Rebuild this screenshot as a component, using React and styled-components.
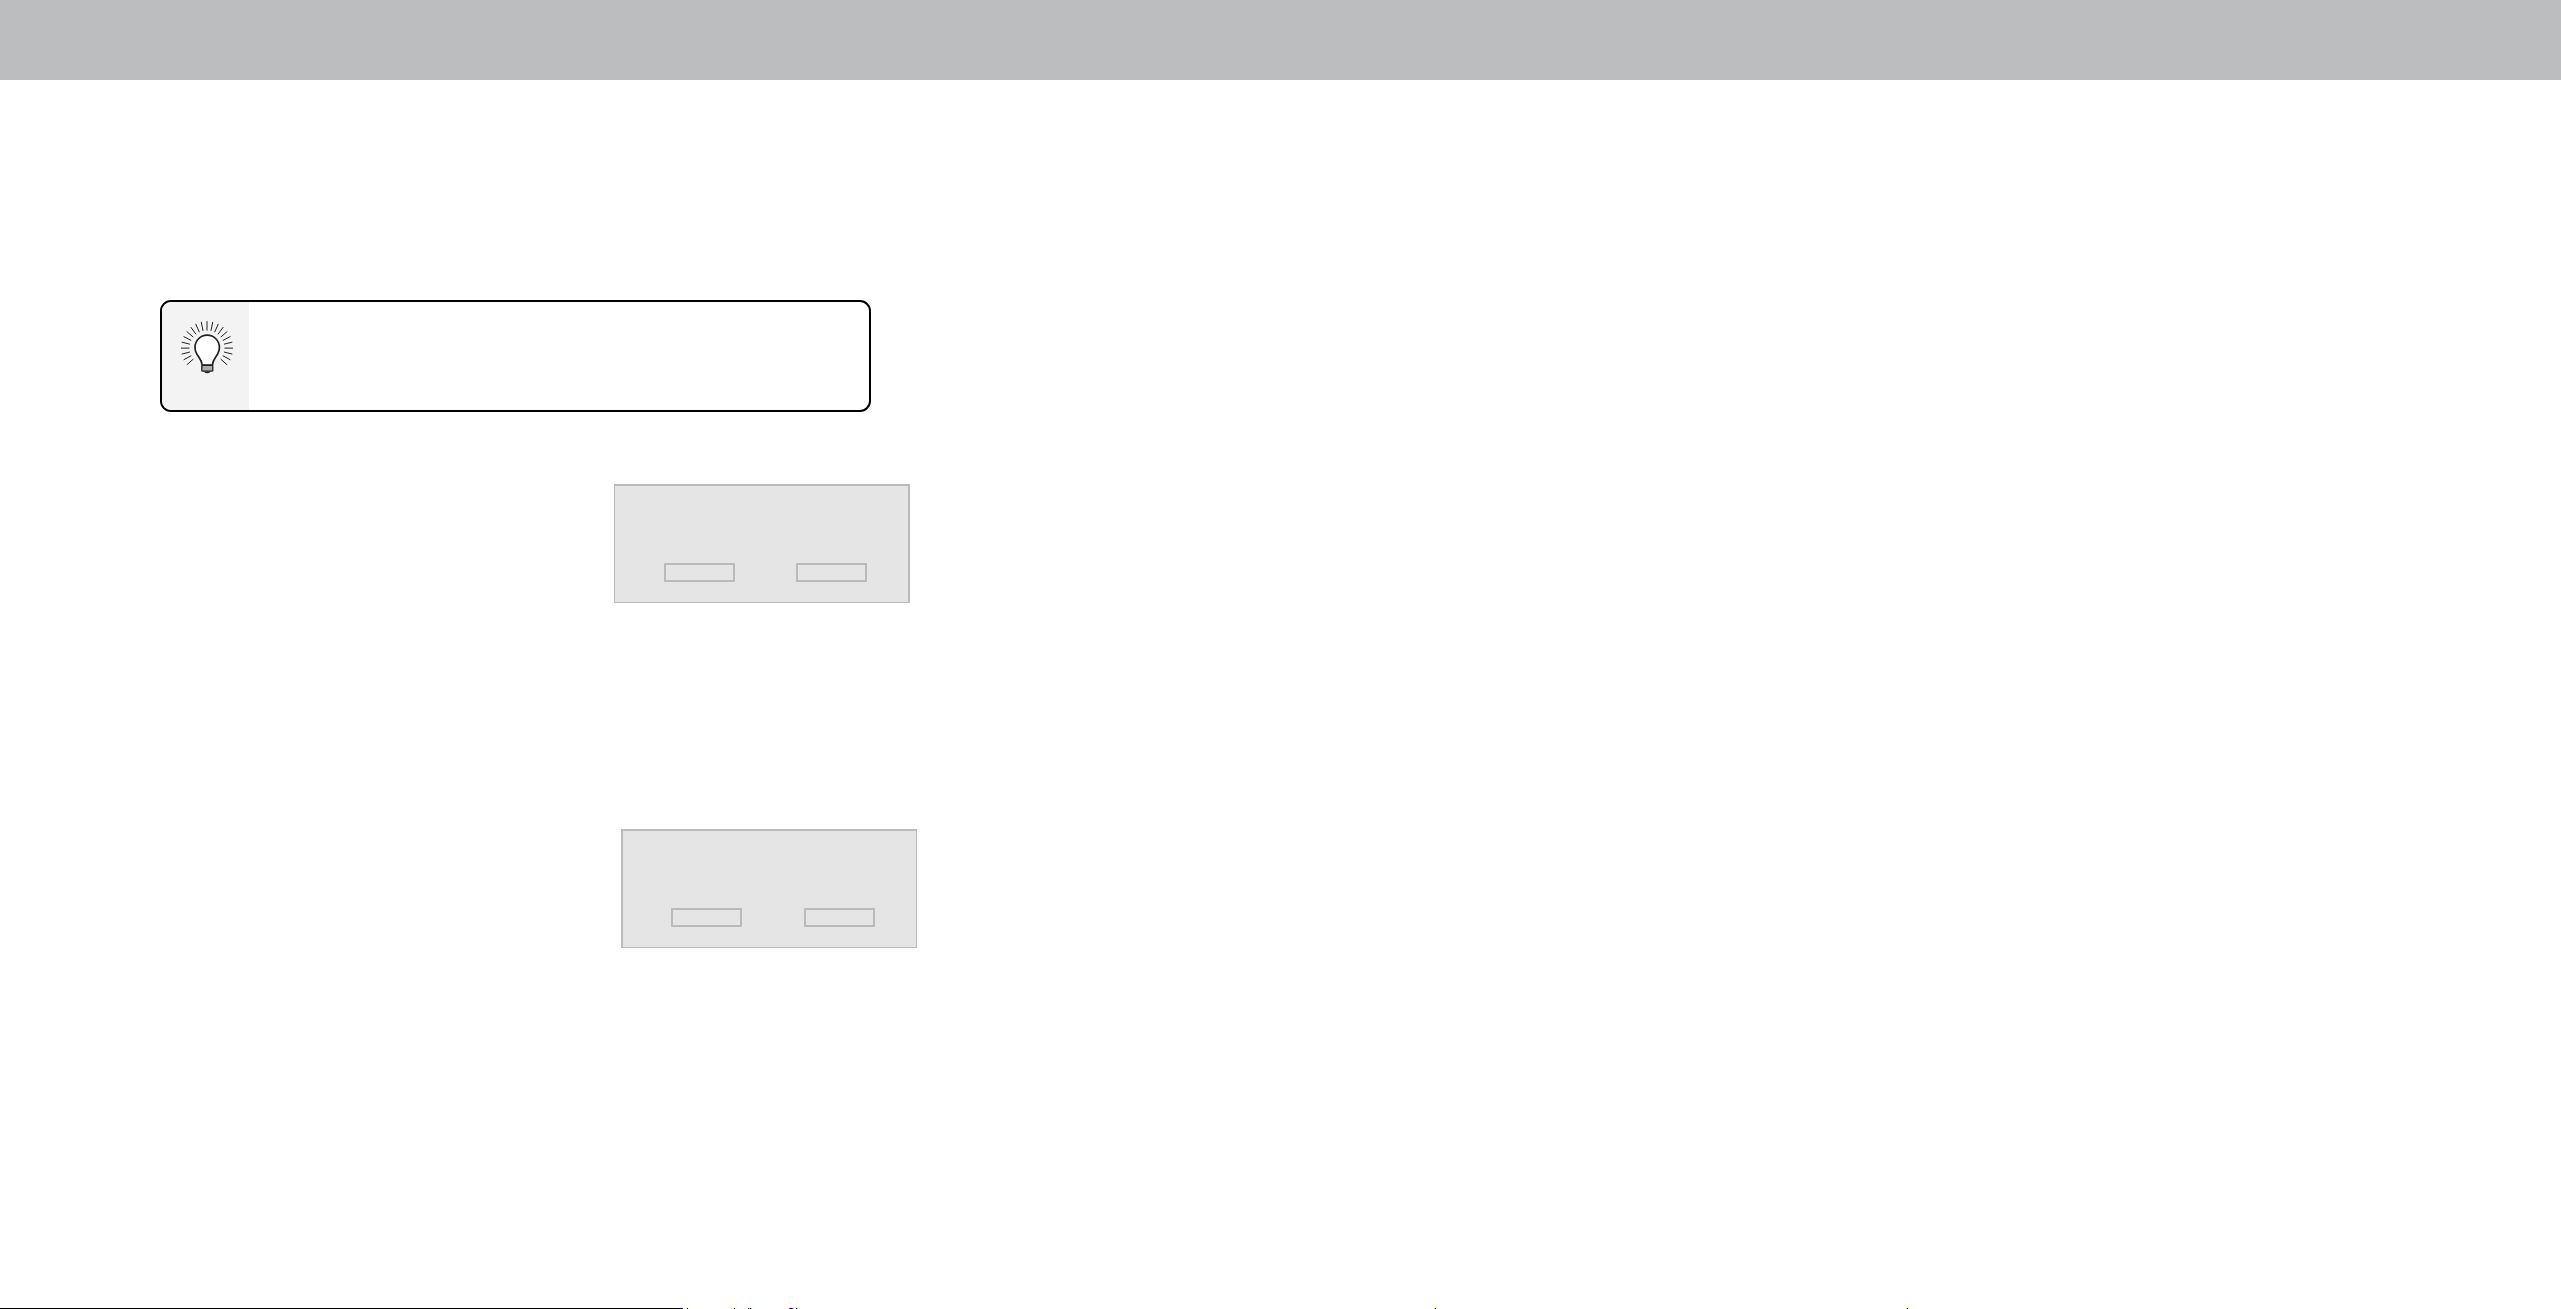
import React from "react";
import styled, { createGlobalStyle } from "styled-components";

const GlobalStyle = createGlobalStyle`
  * {
    box-sizing: border-box;
  }
  body {
    margin: 0;
    background: #fff;
    font-family: "Liberation Sans", Arial, sans-serif;
  }
`;

const Page = styled.div`
  width: 2561px;
  height: 1309px;
  display: flex;
  flex-direction: column;
  overflow: hidden;
`;

const HeaderBar = styled.header`
  flex: none;
  height: 80px;
  background: #bcbdbf;
`;

const Content = styled.main`
  flex: 1;
  display: flex;
  flex-direction: column;
  align-items: flex-start;
  padding: 220px 0 0 160px;
`;

const TipBox = styled.section`
  width: 711px;
  height: 112px;
  display: flex;
  border: 2px solid #000;
  border-radius: 11px;
  overflow: hidden;
`;

const TipIcon = styled.div`
  width: 87px;
  padding: 17px 0 0 17px;
  background: #f3f3f3;
`;

const Dialog = styled.section`
  width: 296px;
  height: 119px;
  display: flex;
  align-items: flex-end;
  gap: ${({ $gap }) => $gap}px;
  margin: ${({ $margin }) => $margin};
  padding: 0 0 20px ${({ $inset }) => $inset}px;
  border: solid #bababa;
  border-width: ${({ $borders }) => $borders};
  background: #e5e5e5;
`;

const DialogButton = styled.div`
  width: 71px;
  height: 19px;
  border: 2px solid #bababa;
`;

const FooterRule = styled.footer`
  flex: none;
  height: 1px;
  display: flex;
`;

const Segment = styled.span`
  width: ${({ $width }) => $width}px;
  height: 1px;
  background: ${({ $color }) => $color || "transparent"};
`;

const segments = [
  [682, "#000"],
  [1, "#00f"],
  [3],
  [1, "#ff0"],
  [1, "#000"],
  [45],
  [1, "#ff0"],
  [1, "#00f"],
  [13],
  [1, "#f00"],
  [1, "#0ff"],
  [1, "#000"],
  [1, "#0ff"],
  [37],
  [1, "#f00"],
  [1, "#00f"],
  [1, "#000"],
  [1, "#f00"],
  [1, "#0ff"],
  [2],
  [1, "#000"],
  [1, "#0ff"],
  [636],
  [1, "#ff0"],
  [1, "#000"],
  [470],
  [1, "#ff0"],
  [1, "#000"],
];

const BULB = { x: 28, y: 29 };
const RAY_STEP = 12.9;
const rays = [...Array(21)].map((_, i) => {
  const angle = ((i - 10) * RAY_STEP * Math.PI) / 180;
  const dx = Math.sin(angle);
  const dy = -Math.cos(angle);
  return {
    x1: BULB.x + dx * 17.5,
    y1: BULB.y + dy * 17.5,
    x2: BULB.x + dx * 26,
    y2: BULB.y + dy * 26.8,
  };
});

const Lightbulb = () => (
  <svg width="56" height="57" viewBox="0 0 56 57" fill="none">
    {rays.map((ray, i) => (
      <line key={i} {...ray} stroke="#231f20" strokeWidth="1" />
    ))}
    <path
      d="M23.2 46C22.6 38.5 16 36.5 16 28.4A12.2 12.2 0 0 1 40.4 28.4C40.4 36.5 33.8 38.5 33.4 46Z"
      fill="#fff"
      stroke="#231f20"
      strokeWidth="1.7"
    />
    <path d="M24.7 52.5Q28.2 56.2 31.8 52.5Z" fill="#231f20" />
    <rect
      x="22.8"
      y="46.4"
      width="11"
      height="5.8"
      rx="0.8"
      fill="#aaa"
      stroke="#231f20"
      strokeWidth="1.3"
    />
  </svg>
);

const App = () => {
  return (
    <>
      <GlobalStyle />
      <Page>
        <HeaderBar />
        <Content>
          <TipBox>
            <TipIcon>
              <Lightbulb />
            </TipIcon>
          </TipBox>
          <Dialog
            $margin="72px 0 0 454px"
            $borders="2px 2px 1px 1px"
            $inset={49}
            $gap={61}
          >
            <DialogButton />
            <DialogButton />
          </Dialog>
          <Dialog
            $margin="226px 0 0 461px"
            $borders="2px 1px 1px 2px"
            $inset={48}
            $gap={62}
          >
            <DialogButton />
            <DialogButton />
          </Dialog>
        </Content>
        <FooterRule>
          {segments.map(([width, color], i) => (
            <Segment key={i} $width={width} $color={color} />
          ))}
        </FooterRule>
      </Page>
    </>
  );
};

export default App;
